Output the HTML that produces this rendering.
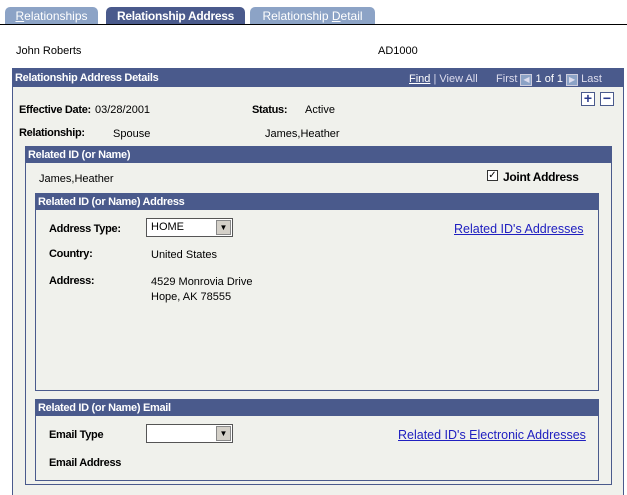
<!DOCTYPE html>
<html><head><meta charset="utf-8"><style>
*{margin:0;padding:0;box-sizing:border-box}
html,body{width:627px;height:495px;overflow:hidden}
body{background:#fff;font-family:"Liberation Sans",Arial,sans-serif;font-size:11px;color:#000;position:relative}
.a{position:absolute;white-space:nowrap}
.b{font-weight:bold;letter-spacing:-0.3px}
.tab{position:absolute;top:7px;height:18px;background:#8ca3c6;color:#fff;font-size:12px;padding-top:2px;text-align:center;border-radius:5px 5px 0 0;white-space:nowrap}
.box{position:absolute;border:1px solid #4a5a8c;background:#f0f1ec}
.hd{background:#4a5a8c;color:#fff;font-weight:bold;font-size:11px;letter-spacing:-0.3px;height:16px;padding:2px 2px;white-space:nowrap}
.sel{position:absolute;width:87px;height:19px;border:1px solid #555;background:#fff;font-size:11px;padding:2px 0 0 4px}
.sel i{position:absolute;right:1px;top:1px;width:15px;height:15px;background:#d4d0c8;border:1px solid #888;font-style:normal;font-size:8px;text-align:center;line-height:14px}
a{color:#2020c0;text-decoration:underline;font-size:12.5px}
</style></head><body>
<div class="tab" style="left:5px;width:93px"><u>R</u>elationships</div>
<div class="tab" style="left:106px;width:139px;background:#4a5a8c;font-weight:bold;letter-spacing:-0.3px">Relationship Address</div>
<div class="tab" style="left:250px;width:125px">Relationship <u>D</u>etail</div>
<div class="a" style="left:0;top:24px;width:627px;height:1px;background:#000"></div>
<div class="a" style="left:16px;top:45px">John Roberts</div>
<div class="a" style="left:378px;top:45px">AD1000</div>

<div class="box" style="left:12px;top:68px;width:612px;height:440px">
 <div class="hd" style="height:18px;padding-top:3px">Relationship Address Details
  <span style="position:absolute;left:396px;top:4px;font-weight:normal;font-size:11px;letter-spacing:0;color:#dde"><u style="color:#fff">Find</u> | View All &nbsp;&nbsp;&nbsp;&nbsp; First <span style="display:inline-block;width:12px;height:12px;background:#8ca3c6;border:1px solid #ccd;font-size:8px;text-align:center;line-height:10px">◀</span> <span style="color:#fff">1 of 1</span> <span style="display:inline-block;width:12px;height:12px;background:#8ca3c6;border:1px solid #ccd;font-size:8px;text-align:center;line-height:10px">▶</span> Last</span>
 </div>
</div>
<div class="a" style="left:581px;top:92px;width:14px;height:14px;border:1px solid #4a5a8c;background:#fff;color:#2a3a8c;font-weight:bold;font-size:14px;line-height:11px;text-align:center">+</div>
<div class="a" style="left:600px;top:92px;width:14px;height:14px;border:1px solid #4a5a8c;background:#fff;color:#2a3a8c;font-weight:bold;font-size:14px;line-height:11px;text-align:center">−</div>
<div class="a b" style="left:19px;top:104px">Effective Date:</div>
<div class="a" style="left:95px;top:104px">03/28/2001</div>
<div class="a b" style="left:252px;top:104px">Status:</div>
<div class="a" style="left:305px;top:104px">Active</div>
<div class="a b" style="left:19px;top:127px">Relationship:</div>
<div class="a" style="left:113px;top:128px">Spouse</div>
<div class="a" style="left:265px;top:128px">James,Heather</div>

<div class="box" style="left:25px;top:146px;width:587px;height:339px"><div class="hd">Related ID (or Name)</div></div>
<div class="a" style="left:39px;top:173px">James,Heather</div>
<div class="a" style="left:487px;top:170px;width:11px;height:11px;border:1px solid #333;background:#fff;font-size:10px;line-height:9px;text-align:center">✓</div>
<div class="a b" style="left:503px;top:170px;font-size:12px">Joint Address</div>

<div class="box" style="left:35px;top:193px;width:564px;height:198px"><div class="hd">Related ID (or Name) Address</div></div>
<div class="a b" style="left:49px;top:223px">Address Type:</div>
<div class="sel" style="left:146px;top:218px">HOME<i>▼</i></div>
<div class="a" style="left:454px;top:222px"><a>Related ID's Addresses</a></div>
<div class="a b" style="left:49px;top:248px">Country:</div>
<div class="a" style="left:151px;top:249px">United States</div>
<div class="a b" style="left:49px;top:275px">Address:</div>
<div class="a" style="left:151px;top:275px;line-height:15px">4529 Monrovia Drive<br>Hope, AK 78555</div>

<div class="box" style="left:35px;top:399px;width:564px;height:82px"><div class="hd">Related ID (or Name) Email</div></div>
<div class="a b" style="left:49px;top:429px">Email Type</div>
<div class="sel" style="left:146px;top:424px"><i>▼</i></div>
<div class="a" style="left:398px;top:428px"><a>Related ID's Electronic Addresses</a></div>
<div class="a b" style="left:49px;top:457px">Email Address</div>
</body></html>
